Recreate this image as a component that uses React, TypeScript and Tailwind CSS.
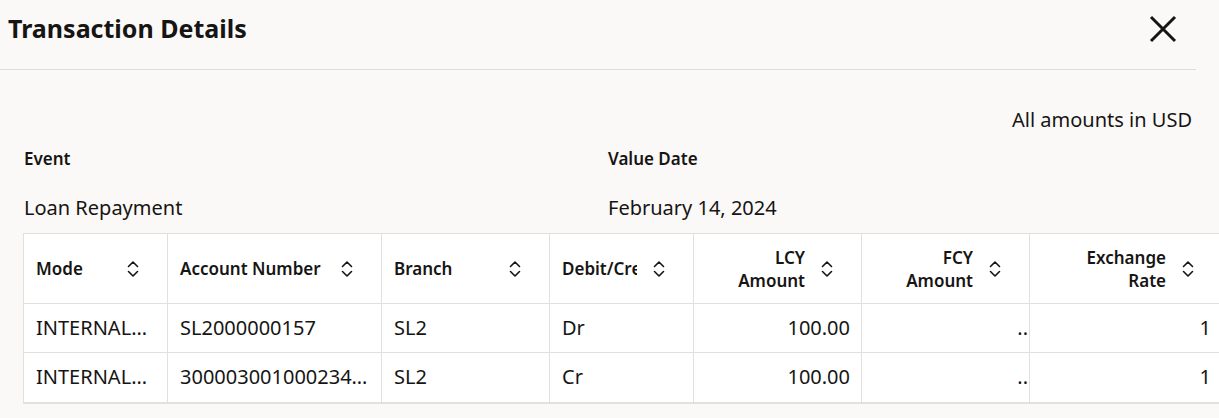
import React from "react";

const SortIcon = () => (
  <svg width="12" height="18" viewBox="0 0 12 18" fill="none" stroke="#161513" strokeWidth="1.6" strokeLinecap="round" strokeLinejoin="round">
    <path d="M1.5 6.5 L6 2 L10.5 6.5" />
    <path d="M1.5 11.5 L6 16 L10.5 11.5" />
  </svg>
);

type Col = { label: string[]; w: number; right?: boolean };

const cols: Col[] = [
  { label: ["Mode"], w: 144 },
  { label: ["Account Number"], w: 214 },
  { label: ["Branch"], w: 168 },
  { label: ["Debit/Credit"], w: 144 },
  { label: ["LCY", "Amount"], w: 168, right: true },
  { label: ["FCY", "Amount"], w: 168, right: true },
  { label: ["Exchange", "Rate"], w: 193, right: true },
];

const rows = [
  ["INTERNAL_TRANSFER", "SL2000000157", "SL2", "Dr", "100.00", "..", "1"],
  ["INTERNAL_TRANSFER", "300003001000234567", "SL2", "Cr", "100.00", "..", "1"],
];

export default function App() {
  return (
    <div
      className="w-[1219px] h-[418px] overflow-hidden bg-[#fbf9f8] text-[#161513]"
      style={{ fontFamily: '"Noto Sans", "Open Sans", sans-serif' }}
    >
      <div className="flex items-center justify-between h-[70px] border-b border-[#dfdcda] mr-[23px] pl-2 pr-[19px]">
        <h1 className="text-[25px] font-bold leading-none -mt-[13px]">Transaction Details</h1>
        <svg width="28" height="28" viewBox="0 0 28 28" className="-mt-[12px]" stroke="#161513" strokeWidth="3" strokeLinecap="butt">
          <path d="M2 2 L26 26 M26 2 L2 26" />
        </svg>
      </div>

      <div className="pl-6">
        <div className="flex justify-end pr-[27px] pt-[37px] text-[20px] leading-[26px]">All amounts in USD</div>
        <div className="grid grid-cols-[584px_1fr] mt-[14px]">
          <div>
            <div className="text-[17px] font-semibold leading-[24px]">Event</div>
            <div className="text-[20px] leading-[26px] mt-[24px]">Loan Repayment</div>
          </div>
          <div>
            <div className="text-[17px] font-semibold leading-[24px]">Value Date</div>
            <div className="text-[20px] leading-[26px] mt-[24px]">February 14, 2024</div>
          </div>
        </div>
      </div>

      <div className="ml-[23px] mt-[12px]">
        <table className="w-[1199px] bg-white border-collapse table-fixed border-l border-t border-[#e2e0de] border-b-2 border-b-[#e2e0de]">
          <colgroup>
            {cols.map((c, i) => (
              <col key={i} style={{ width: c.w }} />
            ))}
          </colgroup>
          <thead>
            <tr className="h-[70px]">
              {cols.map((c, i) => (
                <th key={i} className="border-r border-b border-[#e2e0de] p-0 font-semibold text-[17px]">
                  <div className="flex items-center pl-3 pr-[22px]">
                    <div className={`flex-1 min-w-0 overflow-hidden whitespace-nowrap leading-[23px] ${c.right ? "text-right" : "text-left"}`}>
                      {c.label.map((l, j) => (
                        <div key={j}>{l}</div>
                      ))}
                    </div>
                    <div className="w-6 ml-[10px] flex justify-center shrink-0">
                      <SortIcon />
                    </div>
                  </div>
                </th>
              ))}
            </tr>
          </thead>
          <tbody>
            {rows.map((r, ri) => (
              <tr key={ri} className={ri === 0 ? "h-[49px]" : "h-[50px]"}>
                {r.map((v, ci) => {
                  const c = cols[ci];
                  const isDots = v === "..";
                  return (
                    <td
                      key={ci}
                      className={`border-r border-[#e2e0de] ${ri === 0 ? "border-b" : ""} p-0 text-[20px] font-normal`}
                    >
                      <div
                        className={`overflow-hidden whitespace-nowrap text-ellipsis leading-[26px] ${
                          isDots ? "text-right pr-[1px]" : c.right ? "text-right pl-3 pr-[11px]" : "pl-3 pr-3"
                        }`}
                      >
                        {v}
                      </div>
                    </td>
                  );
                })}
              </tr>
            ))}
          </tbody>
        </table>
      </div>
    </div>
  );
}
